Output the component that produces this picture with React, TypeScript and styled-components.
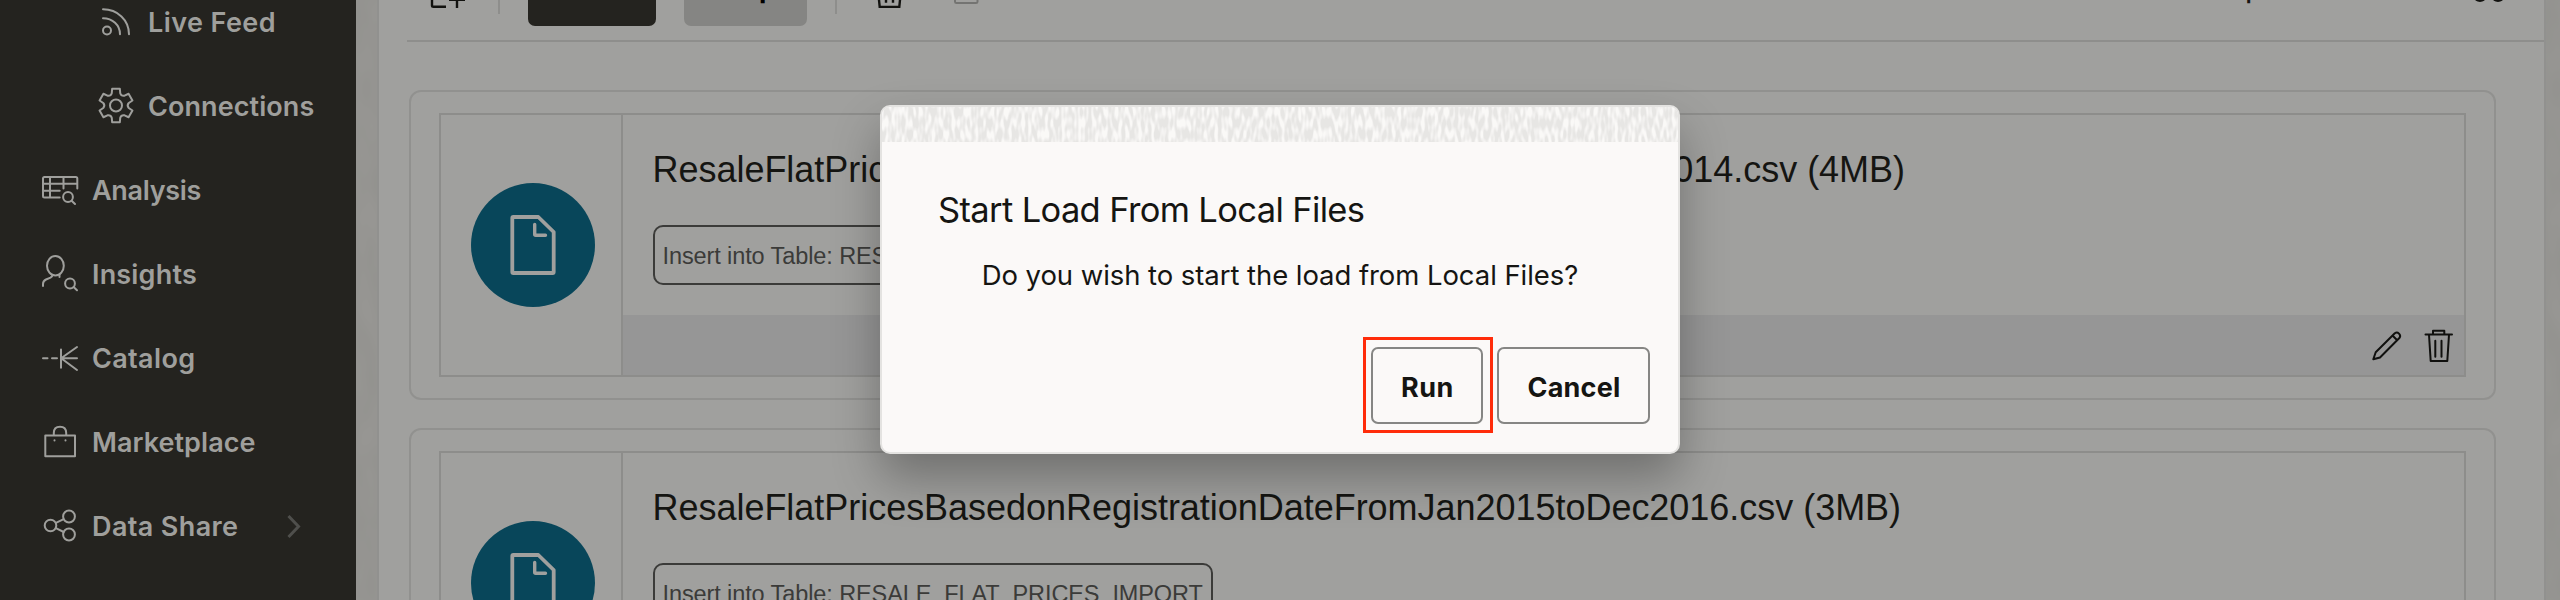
import React from 'react';
import styled, { createGlobalStyle } from 'styled-components';

const GlobalStyle = createGlobalStyle`
  *, *::before, *::after { box-sizing: border-box; }
  body { margin: 0; background: #959490; overflow: hidden; }
`;

const ui = `Inter, "Liberation Sans", sans-serif`;
const doc = `"Liberation Sans", Arial, sans-serif`;

const Page = styled.div`
  position: relative;
  display: flex;
  width: 2560px;
  height: 600px;
  overflow: hidden;
  background: #969592;
  font-family: ${ui};
  color: #151512;
`;

/* ---------- side navigation ---------- */

const Sidebar = styled.nav`
  flex: 0 0 356px;
  height: 600px;
  background: #24231f;
  overflow: hidden;
`;

const NavList = styled.ul`
  list-style: none;
  margin: -20px 0 0;
  padding: 0;
`;

const NavItem = styled.li<{ $nested?: boolean }>`
  display: flex;
  align-items: center;
  height: 84px;
  padding-left: ${(p) => (p.$nested ? '96px' : '40px')};
  padding-right: 53px;
  color: #9f9f9c;
`;

const NavIcon = styled.svg`
  flex: none;
  width: 40px;
  height: 40px;
  margin-right: 12px;
  fill: none;
  stroke: currentColor;
  stroke-width: 2;
  stroke-linecap: round;
  stroke-linejoin: round;
`;

const NavLabel = styled.span<{ $tracking: number }>`
  padding-top: 2px;
  font-size: 27px;
  font-weight: 600;
  line-height: 40px;
  letter-spacing: ${(p) => p.$tracking}px;
  white-space: nowrap;
`;

const Chevron = styled.svg`
  width: 16px;
  height: 26px;
  margin-left: auto;
  fill: none;
  stroke: #4f4f4c;
  stroke-width: 3;
`;

/* ---------- main panel ---------- */

const Gutter = styled.div<{ $width: number }>`
  flex: 0 0 ${(p) => p.$width}px;
  height: 600px;
  overflow: hidden;
`;

const Grain = styled.svg`
  display: block;
  width: 100%;
  height: 100%;
`;

const Panel = styled.main`
  flex: 1;
  height: 600px;
  border: solid #91918f;
  border-width: 0 2px;
  background: #a0a09e;
  padding-left: 28px;
`;

const Toolbar = styled.div`
  display: flex;
  align-items: flex-start;
  gap: 28px;
  height: 42px;
  padding-left: 22px;
  border-bottom: 2px solid #8e8e8c;
`;

const ToolIcon = styled.svg<{ $width: number; $faded?: boolean }>`
  flex: none;
  width: ${(p) => p.$width}px;
  height: 14px;
  fill: none;
  stroke: ${(p) => (p.$faded ? '#747472' : '#12120f')};
  stroke-width: ${(p) => (p.$faded ? 2 : 2.4)};
`;

const ToolDivider = styled.span`
  flex: none;
  width: 2px;
  height: 14px;
  background: #8e8e8c;
`;

const ToolButton = styled.button<{ $primary?: boolean }>`
  display: flex;
  justify-content: center;
  flex: none;
  width: ${(p) => (p.$primary ? 128 : 123)}px;
  height: 26px;
  padding: 0;
  border: 0;
  border-radius: 0 0 7px 7px;
  background: ${(p) => (p.$primary ? '#24231f' : '#858583')};
  color: #000;
  font: 700 27px/20px ${ui};
`;

const ToolText = styled.span`
  margin-top: -21px;
`;

const ToolbarEnd = styled.div`
  display: flex;
  align-items: flex-start;
  gap: 208px;
  margin-left: auto;
  padding-right: 26px;
  font-size: 27px;
  font-weight: 500;
  line-height: 20px;
`;

const Cards = styled.div`
  display: flex;
  flex-direction: column;
  gap: 28px;
  padding: 48px 48px 0 2px;
`;

const Card = styled.section`
  height: 310px;
  padding: 21px 28px;
  border: 2px solid #91918f;
  border-radius: 12px;
`;

const CardGrid = styled.div`
  display: grid;
  grid-template-columns: 182px 1fr;
  height: 264px;
  border: 2px solid #8d8d8b;
`;

const CardThumb = styled.div`
  display: flex;
  align-items: center;
  padding-left: 30px;
  border-right: 2px solid #8d8d8b;
`;

const FileBadge = styled.svg`
  width: 124px;
  height: 124px;
  border-radius: 50%;
  background: #08465a;
  fill: none;
  stroke: #a0a09e;
  stroke-width: 3.8;
  stroke-linejoin: round;
  stroke-linecap: round;
`;

const CardBody = styled.div`
  display: flex;
  flex-direction: column;
  align-items: flex-start;
  padding: 35px 0 0 30px;
`;

const FileName = styled.h3`
  margin: 0 0 35px -0.5px;
  font: 400 36px/40px ${doc};
  letter-spacing: -0.03px;
  white-space: nowrap;
`;

const Tag = styled.span`
  width: 560px;
  height: 60px;
  padding: 1px 0 0 7.5px;
  border: 2px solid #3b3b39;
  border-radius: 10px;
  color: #3b3b39;
  font: 400 23.5px/56px ${doc};
  letter-spacing: -0.1px;
  white-space: nowrap;
`;

const CardFooter = styled.div`
  display: flex;
  justify-content: flex-end;
  align-self: stretch;
  gap: 16px;
  height: 60px;
  margin: 30px 0 0 -30px;
  padding: 13px 7px 0 0;
  background: #969696;
`;

const ActionIcon = styled.svg`
  width: 36px;
  height: 36px;
  fill: none;
  stroke: #10100e;
  stroke-width: 2;
  stroke-linecap: round;
  stroke-linejoin: round;
`;

/* ---------- dialog ---------- */

const Overlay = styled.div`
  position: absolute;
  inset: 0;
  display: flex;
  justify-content: center;
  align-items: flex-start;
  padding-top: 105px;
`;

const Dialog = styled.div`
  width: 800px;
  height: 349px;
  border: 2px solid #e4e3e1;
  border-radius: 10px;
  background: #fbf9f8;
  box-shadow: 0 24px 48px rgba(0, 0, 0, 0.3);
`;

const DialogStripe = styled.div`
  height: 35px;
  overflow: hidden;
  border-radius: 8px 8px 0 0;
`;

const DialogTitle = styled.h2`
  margin: 48px 0 0 56px;
  font-size: 34.5px;
  font-weight: 400;
  line-height: 40px;
  letter-spacing: -0.64px;
`;

const DialogText = styled.p`
  margin: 29px 0 0 99.7px;
  font-size: 27.5px;
  line-height: 32px;
  letter-spacing: -0.065px;
`;

const DialogActions = styled.div`
  display: flex;
  justify-content: flex-end;
  gap: 14px;
  margin-top: 56px;
  padding-right: 28px;
`;

const Button = styled.button<{ $width: number; $tracking: number }>`
  position: relative;
  width: ${(p) => p.$width}px;
  height: 77px;
  padding: 4px 0 0 1px;
  border: 2px solid #868684;
  border-radius: 7px;
  background: transparent;
  color: #151512;
  font: 700 27px/32px ${ui};
  letter-spacing: ${(p) => p.$tracking}px;
`;

const Highlight = styled.span`
  position: absolute;
  inset: -12px -12px -11px -10px;
  border: 3px solid #ff2c0a;
  pointer-events: none;
`;

/* ---------- drawings ---------- */

const gearPath = (() => {
  const at = (r: number, deg: number) => {
    const t = ((deg - 90) * Math.PI) / 180;
    return `${(20 + r * Math.cos(t)).toFixed(2)} ${(19.5 + r * Math.sin(t)).toFixed(2)}`;
  };
  let d = '';
  for (let k = 0; k < 6; k++) {
    const a = k * 60;
    d += `${k ? 'L' : 'M'}${at(17.2, a - 13)}L${at(17.2, a + 13)}L${at(13, a + 19)}Q${at(10.6, a + 30)} ${at(13, a + 41)}`;
  }
  return d + 'Z';
})();

const icons = {
  feed: (
    <>
      <circle cx="11" cy="28.5" r="4" />
      <path d="M7 16.3C16.500 16.300 24 23 24 32.300M7 7.300C21.500 7.300 33 18 33 32.300" />
    </>
  ),
  gear: (
    <>
      <path d={gearPath} />
      <circle cx="20" cy="19.5" r="6" />
    </>
  ),
  analysis: (
    <>
      <path d="M37.300 18.500V8.500Q37.300 7 35.800 7H4.500Q3 7 3 8.500V26Q3 27.500 4.500 27.500H19.700M3 13.700H37M3 20.800H19.700M10 7V27.500M23.500 7V18.500" />
      <circle cx="28" cy="27" r="4.9" />
      <path d="M31.600 30.700L35 34" />
    </>
  ),
  insights: (
    <>
      <ellipse cx="15.400" cy="11.700" rx="8.400" ry="9.700" />
      <path d="M3 32V30Q3 27 6 25.500L10.500 23.600Q12.500 22.500 12.500 20.800M19.500 20.800V23" />
      <circle cx="30" cy="29.500" r="4.900" />
      <path d="M33.600 33L37 36.300" />
    </>
  ),
  catalog: (
    <path d="M3 20.300H7.500M12 20.300H17M21 11.500V29.700M21.500 20.300H37M37 9L22.500 19.300V21.300L37 32" />
  ),
  market: (
    <>
      <path d="M5.300 13.500H35V34.300H5.300ZM13.800 13V11Q13.800 4.700 20 4.700T26.200 11V13" />
      <path d="M14.500 18.300V18.400M25.500 18.300V18.400" />
    </>
  ),
  share: (
    <>
      <circle cx="10.500" cy="19.500" r="5.800" />
      <circle cx="29" cy="10.500" r="5.900" />
      <circle cx="29" cy="28.500" r="5.900" />
      <path d="M15.900 16.900L23.700 13.200M15.900 22.200L23.700 26" />
    </>
  ),
};

type NavEntry = {
  label: string;
  icon: keyof typeof icons;
  tracking: number;
  nested?: boolean;
  expandable?: boolean;
};

const nav: NavEntry[] = [
  { label: 'Live Feed', icon: 'feed', tracking: 0.42, nested: true },
  { label: 'Connections', icon: 'gear', tracking: 0.08, nested: true },
  { label: 'Analysis', icon: 'analysis', tracking: -0.32 },
  { label: 'Insights', icon: 'insights', tracking: 0.18 },
  { label: 'Catalog', icon: 'catalog', tracking: 0.35 },
  { label: 'Marketplace', icon: 'market', tracking: 0.05 },
  { label: 'Data Share', icon: 'share', tracking: 0.38, expandable: true },
];

const files = [
  'ResaleFlatPricesBasedonRegistrationDateFromMar2012toDec2014.csv (4MB)',
  'ResaleFlatPricesBasedonRegistrationDateFromJan2015toDec2016.csv (3MB)',
];

const GutterTexture = ({ id }: { id: string }) => (
  <Grain>
    <filter id={id} x="0" y="0" width="100%" height="100%" colorInterpolationFilters="sRGB">
      <feTurbulence type="fractalNoise" baseFrequency="0.05 0.02" numOctaves="2" seed="4" />
      <feColorMatrix values="0 0 0 0 0.56  0 0 0 0 0.56  0 0 0 0 0.545  0.8 0 0 0 -0.15" />
    </filter>
    <rect width="100%" height="100%" fill="#979693" />
    <rect width="100%" height="100%" filter={`url(#${id})`} />
  </Grain>
);

const StripeTexture = () => (
  <Grain>
    <filter id="weave" x="0" y="0" width="100%" height="100%" colorInterpolationFilters="sRGB">
      <feTurbulence type="fractalNoise" baseFrequency="0.3 0.09" numOctaves="1" seed="11" />
      <feColorMatrix values="0 0 0 0 0.98  0 0 0 0 0.975  0 0 0 0 0.97  4 0 0 0 -1.6" />
    </filter>
    <rect width="100%" height="100%" fill="#e7e6e4" />
    <rect width="100%" height="100%" filter="url(#weave)" />
  </Grain>
);

const FileCard = ({ name }: { name: string }) => (
  <Card>
    <CardGrid>
      <CardThumb>
        <FileBadge viewBox="0 0 124 124">
          <path d="M42.300 34H67.300L82.700 49V89Q82.700 90 81.700 90H42.300Q41.300 90 41.300 89V35Q41.300 34 42.300 34Z" />
          <path d="M63.700 41.500V51.300Q63.700 52.300 64.700 52.300H74.500" strokeWidth="3.400" />
        </FileBadge>
      </CardThumb>
      <CardBody>
        <FileName>{name}</FileName>
        <Tag>Insert into Table: RESALE_FLAT_PRICES_IMPORT</Tag>
        <CardFooter>
          <ActionIcon viewBox="0 0 36 36">
            <path d="M4.300 31.300L6.700 24.300L25.800 5.200Q28 3.600 30 5.600T30.600 9.800L11 29.500ZM23.500 7.500L28.200 12.200" />
          </ActionIcon>
          <ActionIcon viewBox="0 0 36 36">
            <path d="M4.500 6.400H31M12 6V2.700H23.300V6M8 6.800L9.700 33H26.300L28 6.800M14.300 12.800V28.700M20.500 12.800V28.700" />
          </ActionIcon>
        </CardFooter>
      </CardBody>
    </CardGrid>
  </Card>
);

export default function App() {
  return (
    <Page>
      <GlobalStyle />
      <Sidebar>
        <NavList>
          {nav.map((n) => (
            <NavItem key={n.label} $nested={n.nested}>
              <NavIcon viewBox="0 0 40 40">{icons[n.icon]}</NavIcon>
              <NavLabel $tracking={n.tracking}>{n.label}</NavLabel>
              {n.expandable && (
                <Chevron viewBox="0 0 16 26">
                  <path d="M1.500 3L11.500 13.500L1.500 24" />
                </Chevron>
              )}
            </NavItem>
          ))}
        </NavList>
      </Sidebar>

      <Gutter $width={21}>
        <GutterTexture id="grain-left" />
      </Gutter>

      <Panel>
        <Toolbar>
          <ToolIcon $width={41} viewBox="0 0 41 14">
            <path d="M3 0V5.500Q3 6.800 4.500 6.800H17M28 0V8" />
            <path d="M20 0.300H36" strokeWidth="1.400" />
          </ToolIcon>
          <ToolDivider />
          <ToolButton $primary aria-label="Start" />
          <ToolButton>
            <ToolText>Stop</ToolText>
          </ToolButton>
          <ToolDivider />
          <ToolIcon $width={48} viewBox="0 0 48 14">
            <path d="M14 0L14.700 6.900H34.300L35 0M21 0V2.700M28 0V2.700" />
          </ToolIcon>
          <ToolIcon $width={48} $faded viewBox="0 0 48 14">
            <path d="M14 0V1.700Q14 3 15.500 3H35Q36.500 3 36.500 1.700V0" />
          </ToolIcon>
          <ToolbarEnd>
            <ToolText>p</ToolText>
            <ToolIcon $width={48} viewBox="0 0 48 14">
              <path d="M6 -0.500Q10 2 14 -0.500M24 -0.500Q28 2 32 -0.500" />
            </ToolIcon>
          </ToolbarEnd>
        </Toolbar>
        <Cards>
          {files.map((f) => (
            <FileCard key={f} name={f} />
          ))}
        </Cards>
      </Panel>

      <Gutter $width={14}>
        <GutterTexture id="grain-right" />
      </Gutter>

      <Overlay>
        <Dialog role="dialog">
          <DialogStripe>
            <StripeTexture />
          </DialogStripe>
          <DialogTitle>Start Load From Local Files</DialogTitle>
          <DialogText>Do you wish to start the load from Local Files?</DialogText>
          <DialogActions>
            <Button $width={112} $tracking={0.5}>
              Run
              <Highlight />
            </Button>
            <Button $width={153} $tracking={0.2}>
              Cancel
            </Button>
          </DialogActions>
        </Dialog>
      </Overlay>
    </Page>
  );
}
